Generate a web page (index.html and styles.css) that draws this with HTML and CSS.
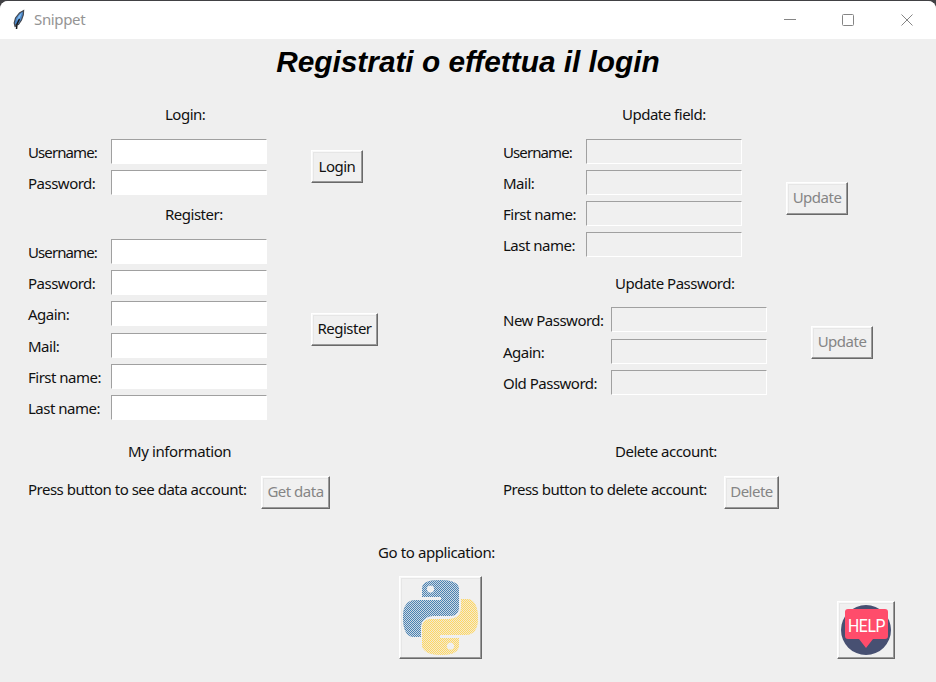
FILE: index.html
```html
<!DOCTYPE html>
<html lang="it">
<head>
<meta charset="utf-8">
<title>Snippet</title>
<link rel="stylesheet" href="styles.css">
</head>
<body>
<div class="window">
  <header class="titlebar">
    <svg class="feather" width="14" height="22" viewBox="0 0 14 22">
      <path d="M3.200 18 2.200 14 3.500 9 7.500 4 11.600 1.500 11.300 6 9.500 11 6.500 15.500 3.600 16Z" fill="#4a86c8" stroke="#454a52" stroke-width="1.200"/>
      <path d="M4.500 12 6.500 7 10 3.500 8 8.500Z" fill="#86bdf0"/>
      <path d="M4.500 20 5 15 7.500 10" fill="none" stroke="#17191c" stroke-width="1.500"/>
    </svg>
    <span class="name">Snippet</span>
    <svg class="controls" width="132" height="14" viewBox="0 0 132 14" fill="none" stroke="#858585">
      <path d="M0 6.500H12"/>
      <rect x="58.500" y="1.500" width="11" height="11" rx="1"/>
      <path d="M117.500 1.500 128.500 12.500M128.500 1.500 117.500 12.500"/>
    </svg>
  </header>
  <h1>Registrati o effettua il login</h1>
  <main class="columns">
    <div class="column">
      <section class="login">
        <h2>Login:</h2>
        <div class="form">
          <div class="fields">
            <label class="tight">Username:</label><input>
            <label>Password:</label><input>
          </div>
          <button class="b52">Login</button>
        </div>
      </section>
      <section class="login">
        <h2>Register:</h2>
        <div class="form">
          <div class="fields">
            <label class="tight">Username:</label><input>
            <label>Password:</label><input>
            <label>Again:</label><input>
            <label>Mail:</label><input>
            <label>First name:</label><input>
            <label>Last name:</label><input>
          </div>
          <button class="b67">Register</button>
        </div>
      </section>
      <section class="info action">
        <h2>My information</h2>
        <div class="line"><span class="prompt">Press button to see data account:</span><button class="b69" disabled>Get data</button></div>
      </section>
    </div>
    <div class="column">
      <section class="update">
        <h2>Update field:</h2>
        <div class="form">
          <div class="fields">
            <label class="tight">Username:</label><input disabled>
            <label>Mail:</label><input disabled>
            <label>First name:</label><input disabled>
            <label>Last name:</label><input disabled>
          </div>
          <button class="b62" disabled>Update</button>
        </div>
      </section>
      <section class="password">
        <h2>Update Password:</h2>
        <div class="form">
          <div class="fields">
            <label>New Password:</label><input disabled>
            <label>Again:</label><input disabled>
            <label>Old Password:</label><input disabled>
          </div>
          <button class="b62" disabled>Update</button>
        </div>
      </section>
      <section class="delete action">
        <h2>Delete account:</h2>
        <div class="line"><span class="prompt">Press button to delete account:</span><button class="b55" disabled>Delete</button></div>
      </section>
    </div>
  </main>
  <footer>
    <div class="app">
      <span class="goto">Go to application:</span>
      <button class="python" disabled aria-label="Python">
        <svg width="77" height="77" viewBox="0 0 77 77">
          <defs>
            <pattern id="dots" width="2" height="2" patternUnits="userSpaceOnUse"><path d="M0 0h1v1H0zM1 1h1v1H1z" fill="#efefef" shape-rendering="crispEdges"/></pattern>
            <path id="blue" d="M37.500 1C25 1 20 4 20 10V18H39V21H14C5 21 1 27 1 38C1 50 4 58 12 58H19V48C19 41 25 37 31 37H49C54 37 57 33 57 28V10C57 4 50 1 37.500 1ZM28.500 6.500a3.600 3.600 0 1 1 0 7.200a3.600 3.600 0 1 1 0-7.200Z"/>
            <path id="yellow" d="M39.500 76C52 76 57 72 57 66V59H38V56H63C72 56 76 50 76 39C76 27 72 20 65 20H59V29C59 36 54 40 47 40H29C23 40 20 44 20 49V66C20 72 27 76 39.500 76ZM48.500 63.500a3.600 3.600 0 1 1 0 7.200a3.600 3.600 0 1 1 0-7.200Z"/>
          </defs>
          <use href="#blue" fill="#4a82b2"/><use href="#yellow" fill="#ffd761"/>
          <use href="#blue" fill="url(#dots)" opacity=".8"/><use href="#yellow" fill="url(#dots)" opacity=".8"/>
        </svg>
      </button>
    </div>
    <button class="help">
      <svg width="52" height="52" viewBox="0 0 52 52">
        <circle cx="26" cy="26" r="25" fill="#475072"/>
        <path d="M8 5H45Q48 5 48 8V32Q48 35 45 35H33L26 44 19 35H8Q5 35 5 32V8Q5 5 8 5Z" fill="#ff4c6b"/>
        <text x="8" y="28" textLength="37" lengthAdjust="spacingAndGlyphs">HELP</text>
      </svg>
    </button>
  </footer>
</div>
</body>
</html>
```
FILE: styles.css
```css
* { box-sizing: border-box; }
body {
  margin: 0;
  background: #414144;
  font: 15px/20px "Noto Sans", "Open Sans", sans-serif;
  letter-spacing: -0.5px;
  color: #111;
}
.window {
  height: 681px;
  margin-top: 1px;
  background: #efefef;
  border-radius: 8px 8px 0 0;
  overflow: hidden;
  display: flex;
  flex-direction: column;
}
.titlebar {
  height: 38px;
  background: #fff;
  display: flex;
  align-items: center;
  padding: 0 20px 0 12px;
}
.name { margin-left: 8px; padding-bottom: 2px; color: #949494; letter-spacing: -0.35px; }
.controls { margin-left: auto; }
h1 {
  margin: 0;
  height: 59px;
  padding-top: 5px;
  text-align: center;
  font: italic bold 29.8px/35px "Liberation Sans", Arial, sans-serif;
  letter-spacing: 0;
  color: #000;
}
.columns { display: grid; grid-template-columns: 475px 433px; padding-left: 28px; height: 427px; }
.column { display: flex; flex-direction: column; }
h2 { margin: 0; height: 37.6px; font: inherit; line-height: 33px; white-space: nowrap; }
.form { display: flex; align-items: center; gap: 44px; }
.fields { display: grid; grid-template-columns: 83px 156px; grid-auto-rows: 31.25px; align-items: center; }
.password .fields { grid-template-columns: 108px 156px; }
label { white-space: nowrap; padding-top: 1px; }
.tight { letter-spacing: -0.9px; }
input {
  width: 156px;
  height: 25px;
  border: 1px solid;
  border-color: #a0a0a0 #fff #fff #a0a0a0;
  background: #fff;
}
input:disabled { background: #f0f0f0; }
button {
  height: 33px;
  padding: 0 0 2px;
  font: inherit;
  letter-spacing: inherit;
  color: #111;
  background: #f0f0f0;
  border: 1px solid;
  border-color: #fff #696969 #696969 #fff;
  box-shadow: inset -1px -1px #9a9a9a, inset 1px 1px #f8f8f8, inset 2px 2px #e6e6e6;
  white-space: nowrap;
}
button:disabled { color: #858585; }
.b52 { width: 52px; }
.b55 { width: 55px; }
.b62 { width: 62px; }
.b67 { width: 67px; }
.b69 { width: 69px; }
.login h2 { padding-left: 137px; }
.info h2 { padding-left: 100px; letter-spacing: -0.4px; }
.update h2 { padding-left: 119px; }
.password h2, .delete h2 { padding-left: 112px; }
.password { margin-top: 6px; }
.password button { margin-bottom: 18px; }
.action { margin-top: auto; height: 90px; }
.line { display: flex; align-items: flex-start; padding-top: 3.4px; }
.prompt { width: 233px; line-height: 27px; white-space: nowrap; }
.delete .prompt { width: 221px; }
footer { display: flex; justify-content: space-between; align-items: flex-end; padding: 17px 41px 0 378px; }
.app { display: flex; flex-direction: column; height: 117px; }
.goto { height: 34px; line-height: 20px; white-space: nowrap; letter-spacing: -0.4px; }
.python { width: 83px; height: 83px; margin-left: 21px; padding: 0; }
.help { width: 58px; height: 58px; padding: 0; }
button svg { display: block; margin: 0 auto; }
.help text { font: 400 19px Roboto, sans-serif; fill: #fff; }
```
